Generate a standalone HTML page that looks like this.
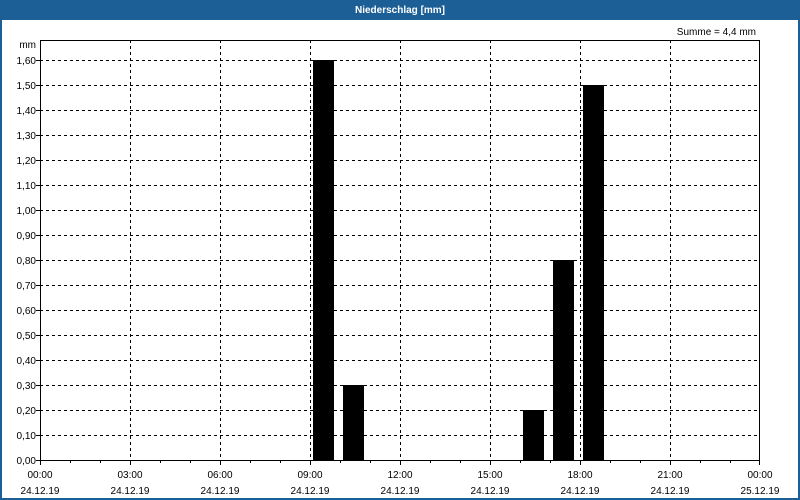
<!DOCTYPE html>
<html><head><style>
body{margin:0;width:800px;height:500px;overflow:hidden;background:#fff;font-family:"Liberation Sans",sans-serif}
</style></head><body>
<svg width="800" height="500" xmlns="http://www.w3.org/2000/svg" style="display:block">
<rect x="0" y="0" width="800" height="500" fill="#fff"/>
<rect x="0" y="0" width="800" height="20" fill="#1c5f96"/>
<rect x="0" y="0" width="2" height="500" fill="#1c5f96"/>
<rect x="798" y="0" width="2" height="500" fill="#1c5f96"/>
<rect x="0" y="498" width="800" height="2" fill="#1c5f96"/>
<text x="400" y="13" fill="#fff" font-size="10" font-weight="bold" text-anchor="middle">Niederschlag [mm]</text>
<text x="756" y="35" font-size="10" text-anchor="end" fill="#000">Summe = 4,4 mm</text>
<text x="36" y="48" font-size="10" text-anchor="end" fill="#000">mm</text>
<g stroke="#000" stroke-width="1" stroke-dasharray="3,3" shape-rendering="crispEdges">
<path id="h" d="M40 60.5H760M40 85.5H760M40 110.5H760M40 135.5H760M40 160.5H760M40 185.5H760M40 210.5H760M40 235.5H760M40 260.5H760M40 285.5H760M40 310.5H760M40 335.5H760M40 360.5H760M40 385.5H760M40 410.5H760M40 435.5H760"/>
<path d="M130.5 40V460M220.5 40V460M310.5 40V460M400.5 40V460M490.5 40V460M580.5 40V460M670.5 40V460"/>
</g>
<g fill="#000" shape-rendering="crispEdges">
<rect x="313" y="60" width="21" height="400"/>
<rect x="343" y="385" width="21" height="75"/>
<rect x="523" y="410" width="21" height="50"/>
<rect x="553" y="260" width="21" height="200"/>
<rect x="583" y="85" width="21" height="375"/>
</g>
<rect x="40.5" y="40.5" width="719" height="420" fill="none" stroke="#000" shape-rendering="crispEdges"/>
<g stroke="#000" shape-rendering="crispEdges">
<path d="M40.5 460V465M70.5 460V463M100.5 460V463M130.5 460V465M160.5 460V463M190.5 460V463M220.5 460V465M250.5 460V463M280.5 460V463M310.5 460V465M340.5 460V463M370.5 460V463M400.5 460V465M430.5 460V463M460.5 460V463M490.5 460V465M520.5 460V463M550.5 460V463M580.5 460V465M610.5 460V463M640.5 460V463M670.5 460V465M700.5 460V463M730.5 460V463M759.5 460V465"/>
<path d="M36 60.5H40M36 85.5H40M36 110.5H40M36 135.5H40M36 160.5H40M36 185.5H40M36 210.5H40M36 235.5H40M36 260.5H40M36 285.5H40M36 310.5H40M36 335.5H40M36 360.5H40M36 385.5H40M36 410.5H40M36 435.5H40M36 460.5H40"/>
</g>
<g font-size="10" text-anchor="end" fill="#000">
<text x="36" y="64">1,60</text><text x="36" y="89">1,50</text><text x="36" y="114">1,40</text><text x="36" y="139">1,30</text><text x="36" y="164">1,20</text><text x="36" y="189">1,10</text><text x="36" y="214">1,00</text><text x="36" y="239">0,90</text><text x="36" y="264">0,80</text><text x="36" y="289">0,70</text><text x="36" y="314">0,60</text><text x="36" y="339">0,50</text><text x="36" y="364">0,40</text><text x="36" y="389">0,30</text><text x="36" y="414">0,20</text><text x="36" y="439">0,10</text><text x="36" y="464">0,00</text>
</g>
<g font-size="10" text-anchor="middle" fill="#000">
<text x="40" y="478">00:00</text><text x="40" y="494">24.12.19</text>
<text x="130" y="478">03:00</text><text x="130" y="494">24.12.19</text>
<text x="220" y="478">06:00</text><text x="220" y="494">24.12.19</text>
<text x="310" y="478">09:00</text><text x="310" y="494">24.12.19</text>
<text x="400" y="478">12:00</text><text x="400" y="494">24.12.19</text>
<text x="490" y="478">15:00</text><text x="490" y="494">24.12.19</text>
<text x="580" y="478">18:00</text><text x="580" y="494">24.12.19</text>
<text x="670" y="478">21:00</text><text x="670" y="494">24.12.19</text>
<text x="760" y="478">00:00</text><text x="760" y="494">25.12.19</text>
</g>
</svg>
</body></html>
